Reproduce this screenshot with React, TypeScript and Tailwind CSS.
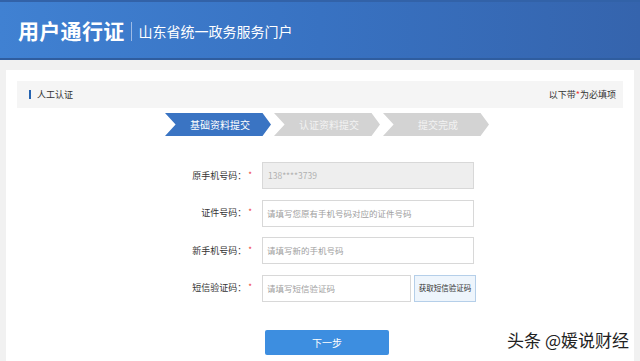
import React from "react";

const font = { fontFamily: '"Microsoft YaHei","Noto Sans CJK SC","Liberation Sans",sans-serif' };

function Row({ label, children }: { label: string; children: React.ReactNode }) {
  return (
    <div className="flex items-center h-[27px]">
      <div className="w-[102px] text-right text-[9px] text-[#333] pr-[10px] whitespace-nowrap">
        {label}：<span className="text-[#e33] text-[8px] align-top ml-[2px]">*</span>
      </div>
      {children}
    </div>
  );
}

export default function App() {
  return (
    <div className="w-[640px] h-[361px] overflow-hidden bg-[#f1f1f1] relative" style={font}>
      <div className="h-[60px] bg-gradient-to-r from-[#4081d2] via-[#3872c2] to-[#3564ad] border-t-2 border-t-[#3262a8] border-b-2 border-b-[#2f5d9f] flex items-center pl-[18px] pt-[2px]">
        <span className="text-white font-bold text-[21px] tracking-[0.3px]">用户通行证</span>
        <span className="w-px h-[19px] bg-[#9dbbe6] ml-[6px] mr-[7px]"></span>
        <span className="text-white text-[14px]">山东省统一政务服务门户</span>
      </div>
      <div className="pt-[10px] pl-[6px] pr-[6px]">
        <div className="bg-white h-[300px] pt-[11px] px-[11px]">
          <div className="h-[27px] bg-[#f5f5f5] flex items-center justify-between pl-[12px] pr-[7px]">
            <div className="flex items-center">
              <span className="w-[2px] h-[9px] bg-[#2563b0] mr-[6px]"></span>
              <span className="text-[9px] text-[#333]">人工认证</span>
            </div>
            <span className="text-[9px] text-[#333]">以下带<span className="text-[#e33]">*</span>为必填项</span>
          </div>
          <div className="flex gap-[3px] pl-[148px] mt-[5px]">
            <div className="w-[106px] h-[23px] bg-[#3a74c3] text-white text-[10px] flex items-center justify-center pl-[4px] [clip-path:polygon(0_0,92%_0,100%_50%,92%_100%,0_100%,10%_50%)]">基础资料提交</div>
            <div className="w-[106px] h-[23px] bg-[#d3d3d3] text-[#f2f2f2] text-[10px] flex items-center justify-center pl-[4px] [clip-path:polygon(0_0,92%_0,100%_50%,92%_100%,0_100%,10%_50%)]">认证资料提交</div>
            <div className="w-[106px] h-[23px] bg-[#d3d3d3] text-[#f2f2f2] text-[10px] flex items-center justify-center pl-[4px] [clip-path:polygon(0_0,92%_0,100%_50%,92%_100%,0_100%,10%_50%)]">提交完成</div>
          </div>
          <div className="flex flex-col gap-[10.5px] mt-[26px] pl-[143px]">
            <Row label="原手机号码">
              <div className="w-[212px] h-[27px] bg-[#eeeeee] border border-[#d8d8d8] text-[8.5px] text-[#b0b0b0] flex items-center pl-[5px]">138****3739</div>
            </Row>
            <Row label="证件号码">
              <div className="w-[212px] h-[27px] bg-white border border-[#d8d8d8] text-[8.5px] text-[#a0a0a0] flex items-center pl-[4px]">请填写您原有手机号码对应的证件号码</div>
            </Row>
            <Row label="新手机号码">
              <div className="w-[212px] h-[27px] bg-white border border-[#d8d8d8] text-[8.5px] text-[#a0a0a0] flex items-center pl-[4px]">请填写新的手机号码</div>
            </Row>
            <Row label="短信验证码">
              <div className="w-[149px] h-[27px] bg-white border border-[#d8d8d8] text-[8.5px] text-[#a0a0a0] flex items-center pl-[4px]">请填写短信验证码</div>
              <div className="ml-[3px] w-[62px] h-[27px] bg-[#eef5fc] border border-[#b5cfe9] text-[7.5px] text-[#333] flex items-center justify-center whitespace-nowrap">获取短信验证码</div>
            </Row>
          </div>
          <div className="pl-[248px] mt-[28px]">
            <div className="w-[124px] h-[25px] bg-[#3d8ee0] rounded-[2px] text-white text-[10px] flex items-center justify-center">下一步</div>
          </div>
        </div>
      </div>
      <div className="absolute right-[11px] bottom-[9px] text-[17px] text-[#222] [text-shadow:0_0_2px_#fff,0_0_2px_#fff]">头条 @媛说财经</div>
    </div>
  );
}
